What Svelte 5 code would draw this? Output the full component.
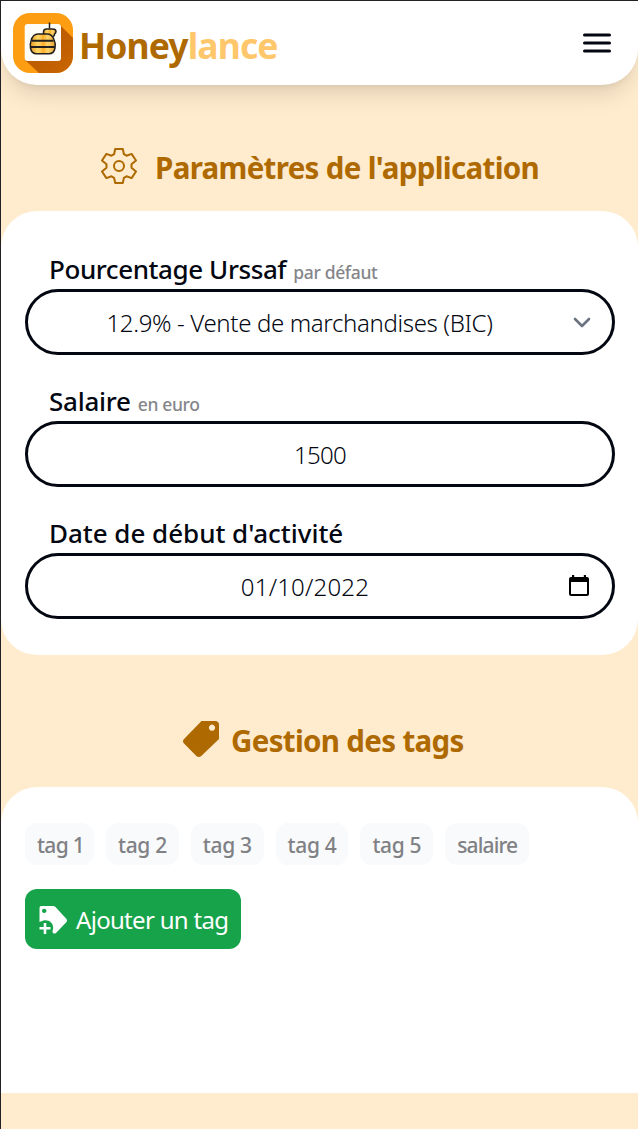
<script>
  const tags = ['tag 1', 'tag 2', 'tag 3', 'tag 4', 'tag 5', 'salaire'];
</script>

<div class="app">
  <header>
    <div class="brand">
      <svg class="logo" viewBox="0 0 60 60">
        <defs>
          <clipPath id="tile"><rect width="60" height="60" rx="17" /></clipPath>
          <linearGradient id="honey"><stop offset="0" stop-color="#e99a20" /><stop offset=".3" stop-color="#ffd765" /><stop offset=".46" stop-color="#ffc04a" /><stop offset=".5" stop-color="#ffab22" /><stop offset=".7" stop-color="#ffd56c" /><stop offset="1" stop-color="#e9a030" /></linearGradient>
          <linearGradient id="shade" x2="1" y2="1"><stop offset=".3" stop-color="#b95900" /><stop offset="1" stop-color="#ca6703" /></linearGradient>
        </defs>
        <g clip-path="url(#tile)">
          <rect width="60" height="60" fill="#fd9d12" />
          <path d="M47 12 60 25V60H26L12 47Z" fill="url(#shade)" />
          <rect x="11.7" y="11" width="36.3" height="37" rx="3" fill="#fffdf8" />
          <g stroke="#22211d" stroke-width="1.5" fill="url(#honey)" stroke-linejoin="round">
            <path d="M36.500 9.500v6" />
            <path d="M30.500 21v-2q0-3 3-3h6q3.500 0 3.500 2.600 0 1.700-1.500 2.400.3 2.600-3 2.600H35Z" />
            <path d="M25 21h9q5 0 7 5.500 1.800 4 1 8.500-1 5.800-6 5.800H23.500q-5 0-6-5.800-.7-4 .5-7 1.700-7 7-7Z" />
            <path d="M19 27.700h21.500M17.500 33.900h24.500" fill="none" stroke-width="2" />
          </g>
        </g>
      </svg>
      <h1>Honey<span>lance</span></h1>
    </div>
    <svg class="menu" viewBox="0 0 28 20"><path d="M1.500 2h25M1.500 10h25M1.500 18h25" /></svg>
  </header>

  <main>
    <h2 class="settings-title">
      <svg class="gear" viewBox="0 0 36 36"><path d="M14.200 1h7.600l1.100 5.200 2.600 1.500 5.100-1.800 4.400 6.600-4.500 3.700v3.600l4.500 3.700-4.400 6.600-5.100-1.800-2.600 1.500-1.100 5.200h-7.600l-1.100-5.200-2.600-1.500-5.100 1.800-4.400-6.600 4.500-3.700v-3.600l-4.500-3.700 4.400-6.600 5.100 1.800 2.600-1.500Z" /><circle cx="18" cy="18" r="5" /></svg>
      <span>Paramètres de l'application</span>
    </h2>
    <section class="card settings">
      <div class="field">
        <div class="label"><b class="rate-label">Pourcentage Urssaf</b><small>par défaut</small></div>
        <div class="control select">
          <span>12.9% - Vente de marchandises (BIC)</span>
          <svg class="chevron" viewBox="0 0 18 12"><path d="M2 2l7 7 7-7" /></svg>
        </div>
      </div>
      <div class="field">
        <div class="label"><b class="salary-label">Salaire</b><small>en euro</small></div>
        <div class="control salary"><span>1500</span></div>
      </div>
      <div class="field">
        <div class="label"><b>Date de début d'activité</b></div>
        <div class="control date">
          <span>01/10/2022</span>
          <svg class="calendar" viewBox="0 0 20 22"><path d="M3 0h2.200v2h9.600V0H17v2h1q2 0 2 2v15q0 2-2 2H2q-2 0-2-2V4q0-2 2-2h1ZM2 7v12h16V7Z" fill-rule="evenodd" /></svg>
        </div>
      </div>
    </section>

    <h2 class="tags-title">
      <svg class="tag-icon" viewBox="0 0 36 36"><path fill-rule="evenodd" d="M18.500 0H32q4 0 4 4v14L18 35.200q-2.200 1.600-4.400 0L.8 22.300q-1.600-2 0-4ZM29 3.600a3.100 3.100 0 1 0 .01 0Z" /></svg>
      <span>Gestion des tags</span>
    </h2>
    <section class="card tags">
      <div class="list">
        {#each tags as tag}
          <span class="tag">{tag}</span>
        {/each}
      </div>
      <button>
        <svg viewBox="0 0 28 28"><path fill-rule="evenodd" d="M2 0h12q1.500 0 2.500 1l11 12q1 1.500 0 3L17 27q-1.500 1-3 0-1-1.500 0-3.500C15 18 11 13.500 4.500 14.500L.5 16V2Q.5 0 2 0ZM5.200 2.700a2.200 2.200 0 1 0 .01 0Z" /><path d="M6 17v11M.5 22.300h11" stroke="#fff" stroke-width="2.600" /></svg>
        <span>Ajouter un tag</span>
      </button>
    </section>
  </main>
</div>

<style>
  :global(body) { margin: 0; background: #ffebcd; }
  * { box-sizing: border-box; }
  .app {
    height: 1129px;
    border-top: 1px solid #222126;
    border-left: 1px solid #222126;
    background: #ffebcd;
    color: #030712;
    font-family: "Noto Sans", "Open Sans", sans-serif;
    overflow: hidden;
  }
  svg { display: block; flex: none; }
  h1, h2 { margin: 0; white-space: nowrap; }
  header {
    height: 84px;
    padding: 0 27px 0 12px;
    display: flex;
    align-items: center;
    justify-content: space-between;
    background: #fff;
    border-radius: 0 0 36px 36px;
    box-shadow: 0 15px 22px -4px rgb(0 0 0 / .1), 0 6px 9px -6px rgb(0 0 0 / .1);
  }
  .brand { display: flex; align-items: center; gap: 6px; }
  .logo { width: 60px; height: 60px; }
  h1 { font-size: 35.5px; line-height: 54px; color: #ae6900; padding-top: 3px; letter-spacing: -.9px; }
  h1 span { color: #ffc76b; }
  .menu { width: 28px; height: 20px; }
  .menu path { stroke: #030712; stroke-width: 3; stroke-linecap: round; }
  h2 { display: flex; align-items: center; color: #ae6900; font-size: 29.5px; line-height: 36px; letter-spacing: -.67px; }
  h2 span { padding-top: 2px; margin-bottom: -2px; height: 38px; }
  .settings-title { padding: 63px 0 27px 100px; gap: 18px; height: 126px; }
  .tags-title { padding: 66px 0 30px 182px; gap: 12px; height: 132px; }
  .gear, .tag-icon { width: 36px; height: 36px; }
  .gear { fill: none; stroke: #ae6900; stroke-width: 2; stroke-linejoin: round; }
  .tag-icon { fill: #ae6900; }
  .card { background: #fff; }
  .settings {
    height: 444px;
    padding: 40px 23px 36px 24px;
    border-radius: 36px;
    display: flex;
    flex-direction: column;
    gap: 28px;
  }
  .label { height: 38px; padding: 0 24px; display: flex; align-items: baseline; gap: 7px; line-height: 36px; white-space: nowrap; }
  .label b { font-size: 26px; font-weight: 500; letter-spacing: -.03px; }
  .label .rate-label { letter-spacing: -.42px; }
  .label .salary-label { letter-spacing: -.25px; }
  .label small { font-size: 17.5px; font-weight: 500; color: #85868a; letter-spacing: -.35px; }
  .control {
    height: 66px;
    border: 3px solid #030712;
    border-radius: 33px;
    display: flex;
    align-items: center;
    justify-content: center;
    font-size: 24px;
    font-weight: 350;
    padding-top: 1px;
    white-space: nowrap;
  }
  .salary { letter-spacing: -.7px; }
  .select, .date { display: grid; grid-template-columns: 1fr 18px; padding: 1px 21px 0 0; text-align: center; }
  .select { letter-spacing: -.35px; }
  .select span { margin-left: -2px; }
  .chevron { width: 18px; height: 12px; fill: none; stroke: #6b7280; stroke-width: 2.600; stroke-linecap: round; stroke-linejoin: round; }
  .date { grid-template-columns: 1fr 20px; padding: 1px 23px 0 13px; letter-spacing: .2px; }
  .calendar { width: 20px; height: 22px; margin-top: -2px; }
  .tags {
    height: 306px;
    padding: 36px 24px;
    border-radius: 36px 36px 0 0;
    display: flex;
    flex-direction: column;
    align-items: flex-start;
    gap: 24px;
  }
  .list { display: flex; gap: 12px; }
  .tag { height: 42px; padding: 2px 12px 0; border-radius: 12px; background: #f9fafb; color: #808184; font-size: 21px; font-weight: 500; line-height: 40px; letter-spacing: -.35px; white-space: nowrap; }
  .tag:first-child { width: 69px; letter-spacing: -.7px; }
  .tag:last-child { letter-spacing: -.85px; }
  button {
    height: 60px;
    width: 216px;
    padding: 0 0 0 14px;
    border: 0;
    border-radius: 12px;
    background: #16a34a;
    color: #fff;
    display: flex;
    align-items: center;
    gap: 9px;
    font: 400 24px "Noto Sans", "Open Sans", sans-serif;
    letter-spacing: -.7px;
    white-space: nowrap;
  }
  button svg { width: 28px; height: 28px; fill: #fff; margin-top: 1px; }
</style>
